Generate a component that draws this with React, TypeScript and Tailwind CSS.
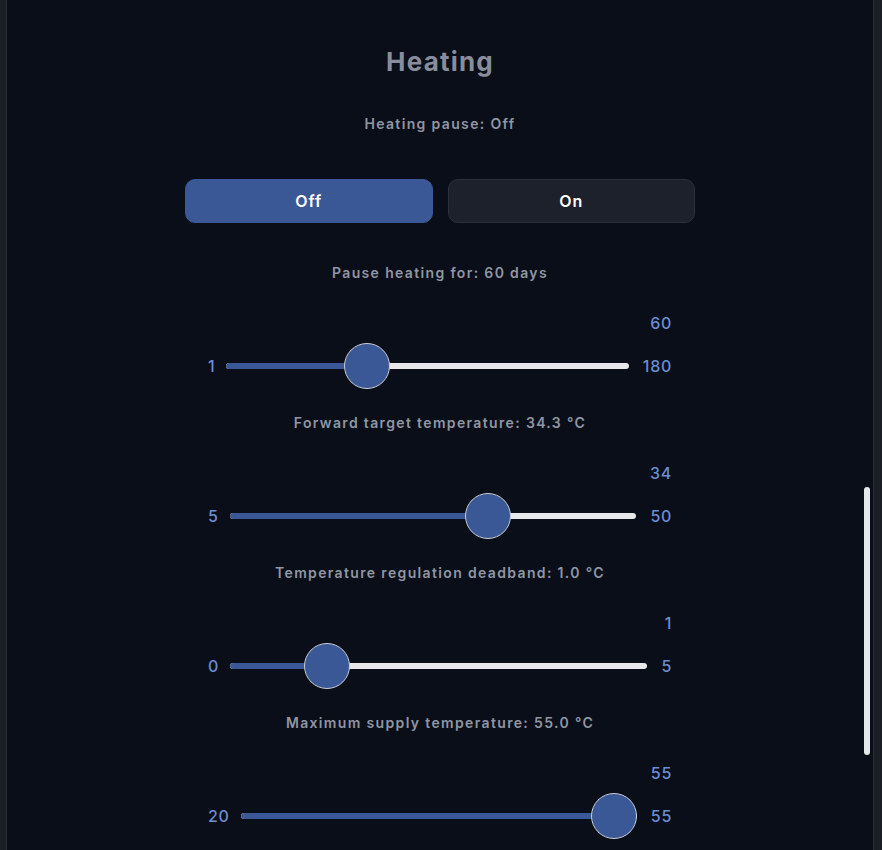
import { useState } from "react";

type SliderSpec = {
  label: string;
  min: number;
  max: number;
  value: number;
};

const sliders: SliderSpec[] = [
  { label: "Pause heating for: 60 days", min: 1, max: 180, value: 60 },
  { label: "Forward target temperature: 34.3 °C", min: 5, max: 50, value: 34.3 },
  { label: "Temperature regulation deadband: 1.0 °C", min: 0, max: 5, value: 1 },
  { label: "Maximum supply temperature: 55.0 °C", min: 20, max: 55, value: 55 },
];

const THUMB = 46;

function SliderRow({ spec }: { spec: SliderSpec }) {
  const frac = (spec.value - spec.min) / (spec.max - spec.min);
  const thumbLeft = `calc(${frac} * (100% - ${THUMB}px))`;
  const fillWidth = `calc(${frac} * (100% - ${THUMB}px) + ${THUMB / 2}px)`;

  return (
    <div className="mb-[23px] flex flex-col">
      <div className="h-5 text-center text-sm font-semibold leading-5 tracking-[1.35px] text-[#8f96a4]">
        {spec.label}
      </div>
      <div className="mx-auto mt-[28px] w-[464px]">
        <div className="h-6 text-right text-base font-medium leading-6 tracking-[0.7px] text-[#6a8dd3]">
          {Math.round(spec.value)}
        </div>
        <div className="mt-[7px] flex h-12 items-center text-base font-medium tracking-[0.7px] text-[#6a8dd3]">
          <span className="mr-[11px]">{spec.min}</span>
          <div className="relative h-12 flex-1">
            <div className="absolute inset-x-0 top-[21px] h-[6px] rounded-full bg-[#e8e8ea]" />
            <div
              className="absolute left-0 top-[21px] h-[6px] rounded-full bg-[#3a5895]"
              style={{ width: fillWidth }}
            />
            <div
              className="absolute top-[1px] h-[46px] w-[46px] rounded-full border-[1.5px] border-[#c9cdd6] bg-[#3a5895]"
              style={{ left: thumbLeft }}
            />
          </div>
          <span className="ml-[14px]">{spec.max}</span>
        </div>
      </div>
    </div>
  );
}

export default function App() {
  const [paused, setPaused] = useState(false);

  return (
    <div
      className="flex h-[850px] w-full overflow-hidden bg-[#1b1e25]"
      style={{ fontFamily: "Inter, 'Noto Sans', sans-serif" }}
    >
      <div className="w-[7px] shrink-0 border-r border-[#2a2e36]" />
      <div className="relative flex-1 overflow-hidden bg-[#0a0e18]">
        <div className="mx-auto flex w-[510px] flex-col pt-[46px]">
          <h1 className="text-center text-[26px] font-bold leading-8 tracking-[1.2px] text-[#878d9c]">
            Heating
          </h1>
          <div className="mt-9 text-center text-sm font-semibold leading-5 tracking-[1.35px] text-[#8f96a4]">
            Heating pause: {paused ? "On" : "Off"}
          </div>
          <div className="mt-[45px] flex gap-[15px]">
            <button
              type="button"
              onClick={() => setPaused(false)}
              className={`h-11 flex-1 rounded-[10px] border text-base font-semibold tracking-[1px] text-white ${
                !paused
                  ? "border-[#3a5895] bg-[#3a5895]"
                  : "border-[#2c313b] bg-[#1c212b]"
              }`}
            >
              Off
            </button>
            <button
              type="button"
              onClick={() => setPaused(true)}
              className={`h-11 flex-1 rounded-[10px] border text-base font-semibold tracking-[1px] text-white ${
                paused
                  ? "border-[#3a5895] bg-[#3a5895]"
                  : "border-[#2c313b] bg-[#1c212b]"
              }`}
            >
              On
            </button>
          </div>
          <div className="mt-10">
            {sliders.map((s) => (
              <SliderRow key={s.label} spec={s} />
            ))}
          </div>
        </div>
        <div className="absolute right-[3px] top-[487px] h-[268px] w-[6px] rounded-full bg-[#e6e7ea]" />
      </div>
      <div className="w-[9px] shrink-0 border-l border-[#2a2e36]" />
    </div>
  );
}
